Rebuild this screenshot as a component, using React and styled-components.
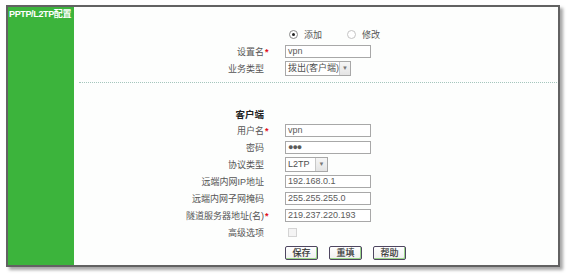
import React from "react";
import styled, { createGlobalStyle } from "styled-components";

const GlobalStyle = createGlobalStyle`
  html, body {
    margin: 0;
    padding: 0;
    background: #ffffff;
  }
  body {
    font-family: "Liberation Sans", "Noto Sans CJK SC", sans-serif;
    font-size: 9px;
    color: #505050;
  }
`;

const Page = styled.div`
  padding: 5px 0 0 6px;
  width: 572px;
  height: 277px;
  box-sizing: border-box;
`;

const Frame = styled.div`
  display: flex;
  width: 554px;
  height: 262px;
  box-sizing: border-box;
  border: 2px solid #626262;
  box-shadow: 3px 3px 3px rgba(0, 0, 0, 0.35);
  background: #fdfefd;
`;

const Sidebar = styled.div`
  width: 66px;
  flex-shrink: 0;
  background: #3cb43c;
  padding: 2px 0 0 1px;
  box-sizing: border-box;
`;

const SideTitle = styled.div`
  color: #fff;
  font-weight: bold;
  font-size: 9px;
  line-height: 11px;
  letter-spacing: -0.35px;
  white-space: nowrap;
`;

const Content = styled.div`
  flex: 1;
  padding: 19px 1px 0 5px;
  display: flex;
  flex-direction: column;
`;

const Row = styled.div`
  display: flex;
  align-items: center;
  height: 17px;
`;

const Label = styled.div`
  width: 185px;
  text-align: right;
  white-space: nowrap;
  color: #555;
  font-weight: ${(p) => (p.$bold ? "bold" : "normal")};
  ${(p) => p.$bold && "color: #222; font-size: 9.5px;"}
`;

const Mark = styled.div`
  width: 21px;
  flex-shrink: 0;
  color: #e0101a;
  font-size: 9px;
  font-weight: bold;
  padding-left: 1px;
  box-sizing: border-box;
`;

const Input = styled.div`
  width: 86px;
  height: 13px;
  box-sizing: border-box;
  border: 1px solid #a8a8a8;
  background: #fff;
  color: #5a5a5a;
  padding-left: 2px;
  line-height: 11px;
  font-size: 9px;
  letter-spacing: ${(p) => (p.$dots ? "-1px" : "0")};
`;

const Select = styled.div`
  display: flex;
  width: ${(p) => p.$w}px;
  height: 15px;
  box-sizing: border-box;
  border: 1px solid #a8a8a8;
  background: #fff;
`;

const SelectText = styled.div`
  flex: 1;
  padding-left: 2px;
  line-height: 13px;
  color: #505050;
  white-space: nowrap;
`;

const SelectArrow = styled.div`
  width: 11px;
  border-left: 1px solid #c8c8c8;
  background: linear-gradient(#f6f6f6, #e4e4e4);
  color: #777;
  font-size: 6px;
  line-height: 13px;
  text-align: center;
`;

const RadioGroup = styled.div`
  display: flex;
  align-items: center;
  padding-left: 4px;
`;

const Radio = styled.span`
  display: inline-flex;
  align-items: center;
  justify-content: center;
  width: 9px;
  height: 9px;
  box-sizing: border-box;
  border-radius: 50%;
  border: 1px solid ${(p) => (p.$on ? "#8a8a8a" : "#c4c4c4")};
  background: #fff;
  margin-right: 6px;
  &::after {
    content: "";
    display: ${(p) => (p.$on ? "block" : "none")};
    width: 3px;
    height: 3px;
    border-radius: 50%;
    background: #222;
  }
`;

const RadioText = styled.span`
  margin-right: ${(p) => p.$gap || 0}px;
  color: #555;
`;

const Divider = styled.div`
  margin-top: 5px;
  border-top: 1px dotted #a4c6bd;
  height: 0;
`;

const ClientBlock = styled.div`
  margin-top: 22px;
  display: flex;
  flex-direction: column;
`;

const Checkbox = styled.span`
  display: inline-block;
  width: 9px;
  height: 9px;
  margin-left: 3px;
  box-sizing: border-box;
  border: 1px solid #d4d4d4;
  background: #f4f4f4;
`;

const ButtonBar = styled.div`
  display: flex;
  gap: 11px;
  margin-top: 5px;
  padding-left: 206px;
`;

const Button = styled.div`
  width: 33px;
  height: 14px;
  box-sizing: border-box;
  border: 1px solid #4e4660;
  border-radius: 2px;
  background: linear-gradient(#ffffff, #f0f0f0);
  box-shadow: inset -1px -1px 0 #9ad68a;
  text-align: center;
  line-height: 12px;
  color: #333;
  font-size: 9px;
  -webkit-text-stroke: 0.2px #333;
`;

const Field = ({ label, required, children }) => (
  <Row>
    <Label>{label}</Label>
    <Mark>{required ? "*" : ""}</Mark>
    {children}
  </Row>
);

export default function App() {
  return (
    <>
      <GlobalStyle />
      <Page>
        <Frame>
          <Sidebar>
            <SideTitle>PPTP/L2TP配置</SideTitle>
          </Sidebar>
          <Content>
            <Field label="">
              <RadioGroup>
                <Radio $on />
                <RadioText $gap={25}>添加</RadioText>
                <Radio />
                <RadioText>修改</RadioText>
              </RadioGroup>
            </Field>
            <Field label="设置名" required>
              <Input>vpn</Input>
            </Field>
            <Field label="业务类型">
              <Select $w={66}>
                <SelectText>拨出(客户端)</SelectText>
                <SelectArrow>▼</SelectArrow>
              </Select>
            </Field>
            <Divider />
            <ClientBlock>
              <Row>
                <Label $bold>客户端</Label>
              </Row>
              <Field label="用户名" required>
                <Input>vpn</Input>
              </Field>
              <Field label="密码">
                <Input $dots>●●●</Input>
              </Field>
              <Field label="协议类型">
                <Select $w={43}>
                  <SelectText>L2TP</SelectText>
                  <SelectArrow>▼</SelectArrow>
                </Select>
              </Field>
              <Field label="远端内网IP地址">
                <Input>192.168.0.1</Input>
              </Field>
              <Field label="远端内网子网掩码">
                <Input>255.255.255.0</Input>
              </Field>
              <Field label="隧道服务器地址(名)" required>
                <Input>219.237.220.193</Input>
              </Field>
              <Field label="高级选项">
                <Checkbox />
              </Field>
              <ButtonBar>
                <Button>保存</Button>
                <Button>重填</Button>
                <Button>帮助</Button>
              </ButtonBar>
            </ClientBlock>
          </Content>
        </Frame>
      </Page>
    </>
  );
}
